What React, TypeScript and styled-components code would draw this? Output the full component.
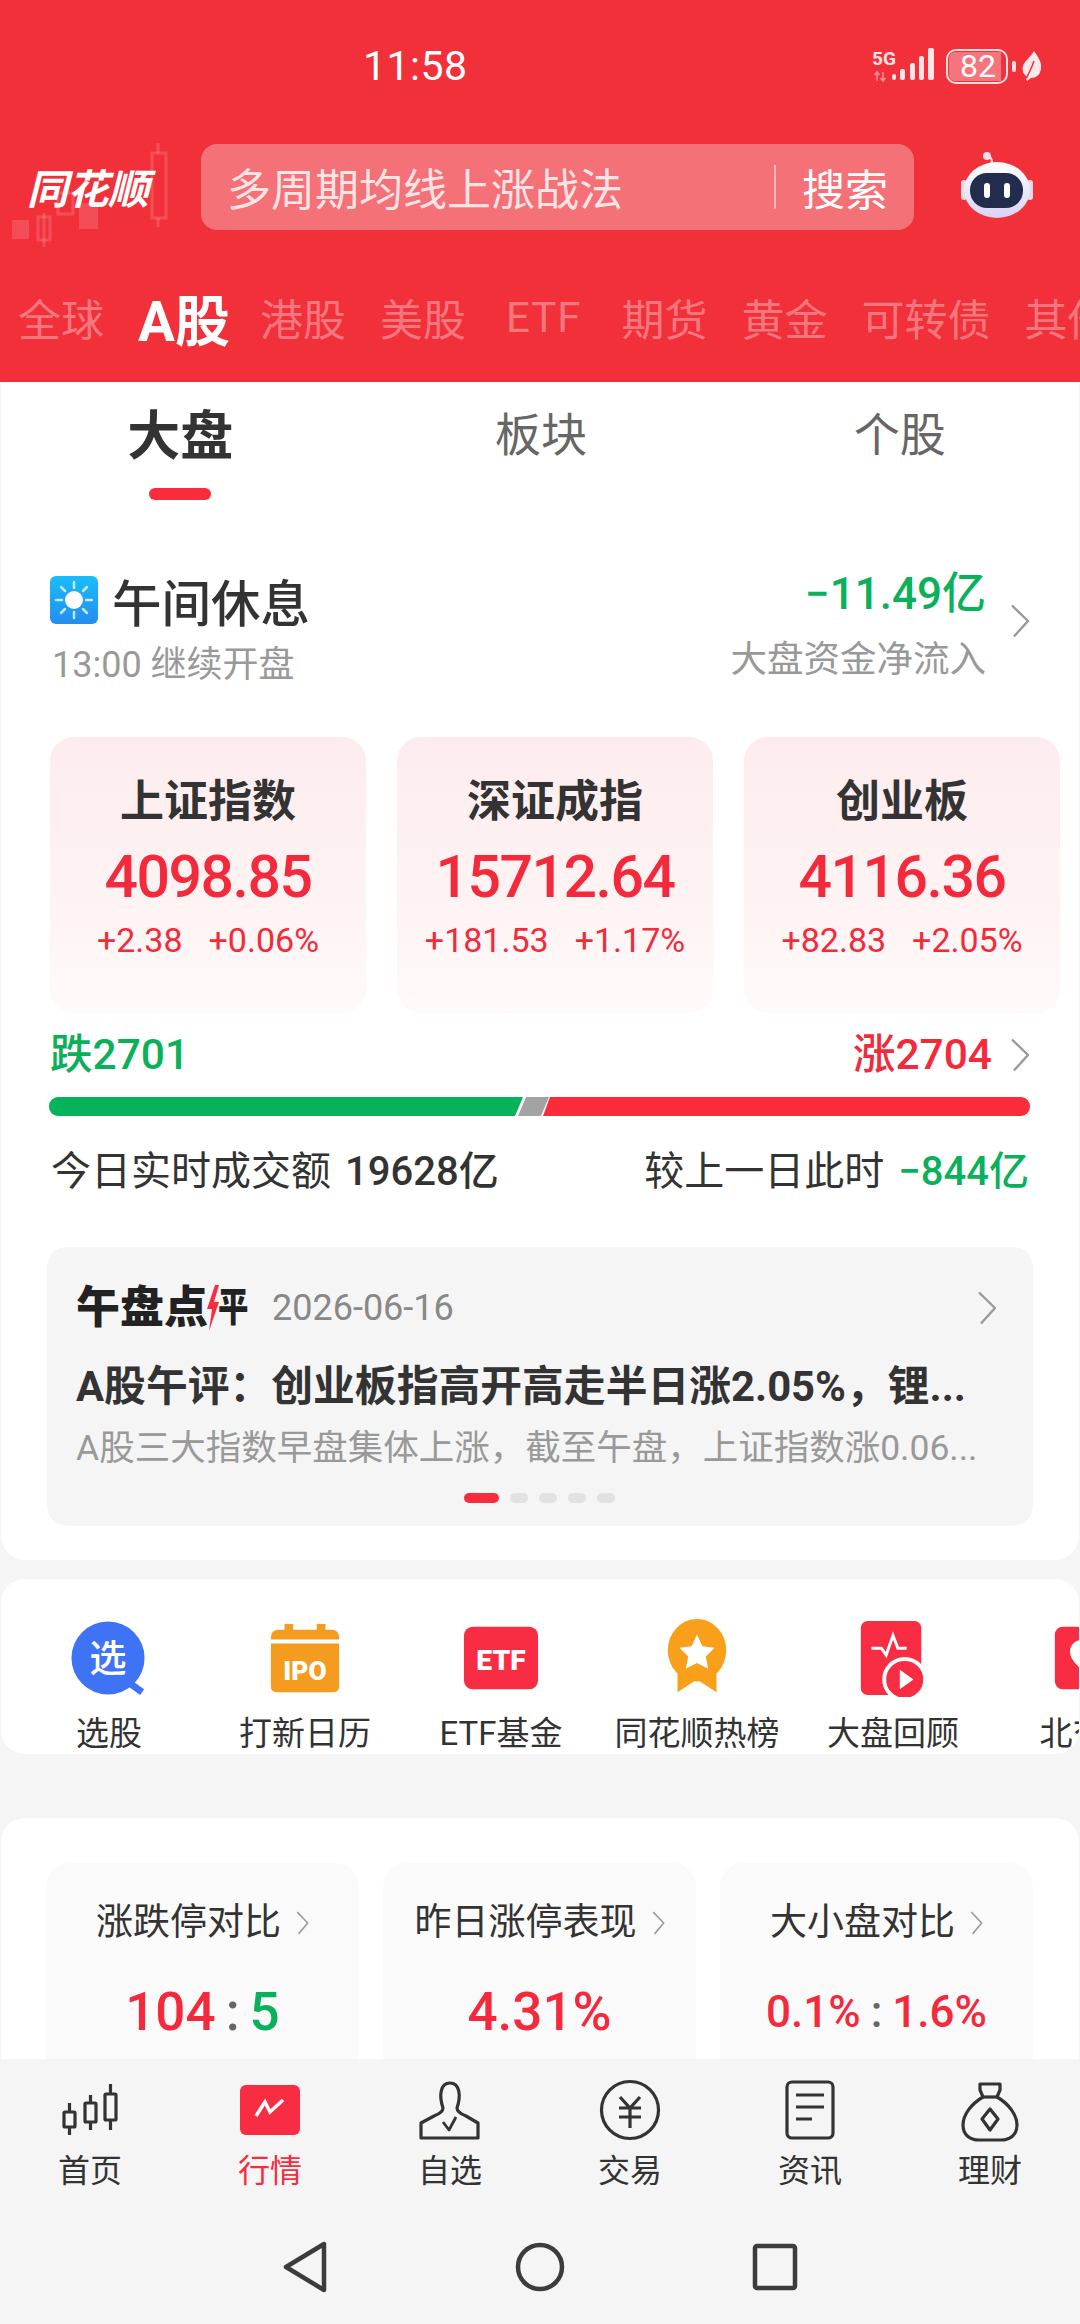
import React from 'react';
import styled, { createGlobalStyle } from 'styled-components';

const RED = '#f32a3c';
const GREEN = '#0bb05a';

const markets = ['全球', 'A股', '港股', '美股', 'ETF', '期货', '黄金', '可转债', '其他'];

const indexes = [
  { name: '上证指数', value: '4098.85', diff: '+2.38', pct: '+0.06%' },
  { name: '深证成指', value: '15712.64', diff: '+181.53', pct: '+1.17%' },
  { name: '创业板', value: '4116.36', diff: '+82.83', pct: '+2.05%' },
];

const Chevron: React.FC<{ w?: number; h?: number }> = ({ w = 20, h = 34 }) => (
  <svg width={w} height={h} viewBox="0 0 20 34" fill="none" preserveAspectRatio="none">
    <path d="M2 1.500 L18 17 L4 32.500" stroke="#999" strokeWidth="2.400" strokeLinejoin="round" />
  </svg>
);

const StatusIcons = () => (
  <StatusRight>
    <svg width="72" height="38" viewBox="0 0 72 38">
      <text x="0" y="18" fontFamily="Roboto" fontWeight="700" fontSize="19" fill="#ffe3e5">5G</text>
      <path d="M5 25v9M2.500 28l2.500-3 2.500 3M11 25v9M8.500 31l2.500 3 2.500-3" stroke="#f78d92" strokeWidth="1.600" fill="none" />
      <rect x="20" y="27" width="4" height="6" rx="2" fill="#ffe3e5" />
      <rect x="28" y="22" width="5" height="11" rx="2" fill="#ffe3e5" />
      <rect x="38" y="16" width="5" height="17" rx="2" fill="#ffe3e5" />
      <rect x="47" y="9" width="5" height="24" rx="2" fill="#ffe3e5" />
      <rect x="56" y="1" width="6" height="32" rx="2" fill="#ffe3e5" />
    </svg>
    <Battery>
      <BatteryLevel>82</BatteryLevel>
    </Battery>
    <BatteryNub />
    <svg width="20" height="30" viewBox="0 0 20 30">
      <path d="M12 0 C16 6 20 11 19 18 C18 24 14 27 9 27 L5 30 L4 28 L6 26 C1 24 0 19 1 15 C3 9 9 6 12 0 Z" fill="#ffe9ea" />
      <path d="M5 26 C8 20 10 16 12 10" stroke="#f1303a" strokeWidth="1.500" fill="none" />
    </svg>
  </StatusRight>
);

const Candles = () => (
  <CandleArt width="170" height="110" viewBox="0 0 170 110">
    <g fill="#ffffff" fillOpacity="0.15" stroke="none">
      <rect x="12" y="82" width="17" height="19" />
      <rect x="79" y="65" width="19" height="26" />
    </g>
    <g fill="none" stroke="#ffffff" strokeOpacity="0.15" strokeWidth="3">
      <rect x="38" y="79" width="12" height="23" />
      <path d="M44 75v34" />
      <rect x="58" y="55" width="15" height="21" />
      <rect x="152" y="15" width="14" height="65" />
      <path d="M158 5v10M158 80v9" />
    </g>
  </CandleArt>
);

const Robot = () => (
  <RobotArt width="72" height="68" viewBox="0 0 72 68">
    <defs>
      <linearGradient id="robotShell" x1="0" y1="0" x2="0" y2="1">
        <stop offset="0" stopColor="#ffffff" />
        <stop offset="1" stopColor="#d9d3f5" />
      </linearGradient>
    </defs>
    <path d="M31 11 C31 6 29 4 26 4" stroke="#f7dfe3" strokeWidth="2" fill="none" />
    <circle cx="26" cy="4" r="4" fill="#f5dfe4" />
    <rect x="0" y="28" width="6" height="20" rx="3" fill="#e9d9e2" />
    <rect x="66" y="28" width="6" height="20" rx="3" fill="#e9d9e2" />
    <ellipse cx="36" cy="38" rx="33" ry="28" fill="url(#robotShell)" />
    <rect x="9" y="21" width="53" height="35" rx="17" fill="#222c4d" />
    <rect x="23" y="31" width="6" height="15" rx="3" fill="#fff" />
    <rect x="43" y="31" width="6" height="15" rx="3" fill="#fff" />
  </RobotArt>
);

const SunIcon = () => (
  <svg width="48" height="48" viewBox="0 0 48 48">
    <defs>
      <linearGradient id="sunBg" x1="0" y1="0" x2="0" y2="1">
        <stop offset="0" stopColor="#19bdf9" />
        <stop offset="1" stopColor="#258cf0" />
      </linearGradient>
    </defs>
    <rect width="48" height="48" rx="6" fill="url(#sunBg)" />
    <circle cx="24" cy="24" r="9" fill="#fff" />
    <path d="M24 6v6M24 36v6M6 24h6M36 24h6M11 11l4 4M33 33l4 4M37 11l-4 4M15 33l-4 4" stroke="#bfeafd" strokeWidth="2.500" strokeLinecap="round" />
  </svg>
);

const PickIcon = () => (
  <svg width="80" height="80" viewBox="0 0 80 80">
    <path d="M62 62 L76 72 L72 78 L58 68 Z" fill="#3f73f6" />
    <circle cx="39" cy="40" r="37.500" fill="#3f73f6" />
    <text x="39" y="54" textAnchor="middle" fontFamily="'Noto Sans CJK SC'" fontWeight="500" fontSize="38" fill="#fff">选</text>
  </svg>
);

const IpoIcon = () => (
  <svg width="80" height="80" viewBox="0 0 80 80">
    <path d="M5 19 Q5 11 13 11 H19 V5 H28 V11 H52 V5 H61 V11 H67 Q75 11 75 19 V21 H5 Z" fill="#f39c1f" />
    <path d="M5 25 H75 V69 Q75 75 69 75 H11 Q5 75 5 69 Z" fill="#f39c1f" />
    <text x="40" y="63" textAnchor="middle" fontFamily="Roboto" fontWeight="900" fontSize="27" fill="#fff">IPO</text>
  </svg>
);

const EtfIcon = () => (
  <svg width="80" height="80" viewBox="0 0 80 80">
    <rect x="2" y="8" width="76" height="64" rx="9" fill="#f82c43" />
    <text x="40" y="52" textAnchor="middle" fontFamily="Roboto" fontWeight="900" fontSize="29" fill="#fff">ETF</text>
  </svg>
);

const MedalIcon = () => (
  <svg width="80" height="80" viewBox="0 0 80 80">
    <path d="M20 50 V75 L40 62 L60 75 V50 Z" fill="#f9a01b" />
    <ellipse cx="40" cy="32" rx="30" ry="32" fill="#f9a01b" />
    <path d="M40 16 L45.500 28 L58 29.500 L49 38.500 L51.500 51 L40 45 L28.500 51 L31 38.500 L22 29.500 L34.500 28 Z" fill="#fff" />
  </svg>
);

const ReviewIcon = () => (
  <svg width="80" height="80" viewBox="0 0 80 80">
    <rect x="7" y="2" width="62" height="76" rx="7" fill="#f82c43" />
    <path d="M18 30 H28 L33 37 L40 17 L45 30 H54" stroke="#fff" strokeWidth="3" fill="none" />
    <circle cx="52" cy="62" r="21" fill="#f82c43" stroke="#fff" strokeWidth="4" />
    <path d="M47 52 L61 62 L47 72 Z" fill="#fff" />
  </svg>
);

const NorthIcon = () => (
  <svg width="80" height="80" viewBox="0 0 80 80">
    <rect x="5" y="8" width="70" height="64" rx="8" fill="#f82c43" />
    <path d="M40 23 C30 18 18 25 21 37 C23 45 33 52 40 59 C47 52 57 45 59 37 C62 25 50 18 40 23 Z" fill="#fff" />
  </svg>
);

const CandleNav = () => (
  <svg width="70" height="64" viewBox="0 0 70 64" fill="none" stroke="#333" strokeWidth="3.200">
    <rect x="9" y="34" width="11" height="15" rx="1" />
    <path d="M14.500 25v9M14.500 49v8" />
    <rect x="30" y="25" width="11" height="19" rx="1" />
    <path d="M35.500 17v8M35.500 44v8" />
    <rect x="50" y="16" width="11" height="26" rx="1" />
    <path d="M55.500 6v10M55.500 42v10" />
  </svg>
);

const MarketNav = () => (
  <svg width="70" height="64" viewBox="0 0 70 64">
    <rect x="5" y="7" width="60" height="50" rx="6" fill="#f82c43" />
    <path d="M21 38 L30 24 L35 34 L48 22" stroke="#fff" strokeWidth="3.500" fill="none" />
  </svg>
);

const WatchNav = () => (
  <svg width="70" height="64" viewBox="0 0 70 64" fill="none" stroke="#333" strokeWidth="3.200" strokeLinejoin="round">
    <path d="M28 30 C24 18 25 5 35 5 C45 5 46 18 42 30 C42 34 46 36 51 38 L63 45 V60 H6 V45 L19 38 C24 36 28 34 28 30 Z" />
    <path d="M28 44 L34 52 L41 39" strokeWidth="2.800" />
  </svg>
);

const TradeNav = () => (
  <svg width="70" height="64" viewBox="0 0 70 64" fill="none" stroke="#333" strokeWidth="3.200">
    <circle cx="35" cy="32" r="28.500" />
    <path d="M25 19 L35 30 L45 19M24 30H46M24 39H46M35 30V50" />
  </svg>
);

const NewsNav = () => (
  <svg width="70" height="64" viewBox="0 0 70 64" fill="none" stroke="#333" strokeWidth="3.200">
    <rect x="12" y="4" width="46" height="56" rx="5" />
    <path d="M21 17H49M21 29H49M21 41H37" />
  </svg>
);

const WealthNav = () => (
  <svg width="70" height="64" viewBox="0 0 70 64" fill="none" stroke="#333" strokeWidth="3.200" strokeLinejoin="round">
    <path d="M25 6 H45 V12 L42 19 C54 26 62 37 62 47 C62 57 55 62 46 62 H24 C15 62 8 57 8 47 C8 37 16 26 28 19 L25 12 Z" />
    <path d="M28 19H42" />
    <path d="M35 31 L43 41 L35 52 L27 41 Z" />
  </svg>
);

const shortcuts = [
  { label: '选股', icon: <PickIcon /> },
  { label: '打新日历', icon: <IpoIcon /> },
  { label: 'ETF基金', icon: <EtfIcon /> },
  { label: '同花顺热榜', icon: <MedalIcon /> },
  { label: '大盘回顾', icon: <ReviewIcon /> },
  { label: '北交所', icon: <NorthIcon /> },
];

const navs = [
  { label: '首页', icon: <CandleNav /> },
  { label: '行情', icon: <MarketNav />, active: true },
  { label: '自选', icon: <WatchNav /> },
  { label: '交易', icon: <TradeNav /> },
  { label: '资讯', icon: <NewsNav /> },
  { label: '理财', icon: <WealthNav /> },
];

const App: React.FC = () => (
  <Page>
    <GlobalStyle />
    <Header>
      <StatusBar>
        <Clock>11:58</Clock>
        <StatusIcons />
      </StatusBar>
      <SearchRow>
        <LogoBox>
          <Candles />
          <LogoText>同花顺</LogoText>
        </LogoBox>
        <SearchBar>
          <Placeholder>多周期均线上涨战法</Placeholder>
          <SearchDivider />
          <SearchButton>搜索</SearchButton>
        </SearchBar>
        <Robot />
      </SearchRow>
      <MarketTabs>
        {markets.map((m) => (
          <MarketTab key={m} $active={m === 'A股'} $latin={m === 'ETF'}>{m}</MarketTab>
        ))}
      </MarketTabs>
    </Header>

    <Scroll>
      <MainCard>
        <SubTabs>
          <SubTab $active>大盘<Indicator /></SubTab>
          <SubTab>板块</SubTab>
          <SubTab>个股</SubTab>
        </SubTabs>

        <SessionRow>
          <div>
            <SessionTitle><SunIcon />午间休息</SessionTitle>
            <SessionSub>13:00 继续开盘</SessionSub>
          </div>
          <FlowBox>
            <div>
              <FlowValue>−11.49亿</FlowValue>
              <FlowLabel>大盘资金净流入</FlowLabel>
            </div>
            <Chevron />
          </FlowBox>
        </SessionRow>

        <IndexRow>
          {indexes.map((x) => (
            <IndexCard key={x.name}>
              <IndexName>{x.name}</IndexName>
              <IndexValue>{x.value}</IndexValue>
              <IndexDiff>
                <span>{x.diff}</span>
                <span>{x.pct}</span>
              </IndexDiff>
            </IndexCard>
          ))}
        </IndexRow>

        <BreadthRow>
          <BreadthText $color={GREEN}>跌2701</BreadthText>
          <BreadthRight>
            <BreadthText $color={RED}>涨2704</BreadthText>
            <Chevron />
          </BreadthRight>
        </BreadthRow>
        <BreadthBar>
          <FallPart />
          <FlatPart />
          <RisePart />
        </BreadthBar>

        <VolumeRow>
          <span>今日实时成交额<VolumeNum>19628亿</VolumeNum></span>
          <span>较上一日此时<VolumeNum $color={GREEN}>−844亿</VolumeNum></span>
        </VolumeRow>

        <NoteCard>
          <NoteHead>
            <NoteBrand>
              午盘点
              <svg width="14" height="46" viewBox="0 0 14 46">
                <path d="M9 0 L1 24 H6 L3 46 L13 17 H8 L13 0 Z" fill="#f82c43" />
              </svg>
              <NoteBrandTail>平</NoteBrandTail>
            </NoteBrand>
            <NoteDate>2026-06-16</NoteDate>
            <NoteChevron><Chevron /></NoteChevron>
          </NoteHead>
          <NoteTitle>A股午评：创业板指高开高走半日涨2.05%，锂...</NoteTitle>
          <NoteDesc>A股三大指数早盘集体上涨，截至午盘，上证指数涨0.06...</NoteDesc>
          <Dots>
            {[0, 1, 2, 3, 4].map((i) => (
              <Dot key={i} $active={i === 0} />
            ))}
          </Dots>
        </NoteCard>
      </MainCard>

      <ShortcutCard>
        {shortcuts.map((s) => (
          <Shortcut key={s.label}>
            {s.icon}
            <ShortcutLabel>{s.label}</ShortcutLabel>
          </Shortcut>
        ))}
      </ShortcutCard>

      <StatsCard>
        <StatTile>
          <StatTitle>涨跌停对比<Chevron w={13} h={24} /></StatTitle>
          <StatValue><Up>104</Up><Colon>:</Colon><Down>5</Down></StatValue>
        </StatTile>
        <StatTile>
          <StatTitle>昨日涨停表现<Chevron w={13} h={24} /></StatTitle>
          <StatValue><Up>4.31%</Up></StatValue>
        </StatTile>
        <StatTile>
          <StatTitle>大小盘对比<Chevron w={13} h={24} /></StatTitle>
          <StatValue $small><Up>0.1%</Up><Colon>:</Colon><Up>1.6%</Up></StatValue>
        </StatTile>
      </StatsCard>
    </Scroll>

    <BottomBar>
      <NavRow>
        {navs.map((n) => (
          <NavItem key={n.label} $active={n.active}>
            {n.icon}
            <NavLabel>{n.label}</NavLabel>
          </NavItem>
        ))}
      </NavRow>
      <SystemNav>
        <svg width="60" height="60" viewBox="0 0 60 60" fill="none" stroke="#3c3c3c" strokeWidth="4.500" strokeLinejoin="round">
          <path d="M49 7 V53 L11 30 Z" />
        </svg>
        <svg width="60" height="60" viewBox="0 0 60 60" fill="none" stroke="#3c3c3c" strokeWidth="4.500">
          <circle cx="30" cy="30" r="22" />
        </svg>
        <svg width="60" height="60" viewBox="0 0 60 60" fill="none" stroke="#3c3c3c" strokeWidth="4.500" strokeLinejoin="round">
          <rect x="10" y="9" width="40" height="42" rx="2" />
        </svg>
      </SystemNav>
    </BottomBar>
  </Page>
);

const GlobalStyle = createGlobalStyle`
  html, body {
    margin: 0;
    padding: 0;
    background: #f5f5f5;
  }
  * {
    box-sizing: border-box;
  }
`;

const Page = styled.div`
  width: 1080px;
  height: 2324px;
  display: flex;
  flex-direction: column;
  overflow: hidden;
  background: #f5f5f5;
  font-family: Roboto, "Noto Sans CJK SC", sans-serif;
  color: #333;
`;

const Header = styled.header`
  height: 382px;
  flex: none;
  overflow: hidden;
  background: #f1303a;
  color: #fff;
`;

const StatusBar = styled.div`
  height: 132px;
  display: flex;
  align-items: center;
  padding: 0 38px 0 363px;
`;

const Clock = styled.div`
  font-size: 41px;
  letter-spacing: 0.5px;
  color: #fff;
`;

const StatusRight = styled.div`
  margin-left: auto;
  display: flex;
  align-items: center;
`;

const Battery = styled.div`
  width: 62px;
  height: 35px;
  margin-left: 2px;
  padding: 1px;
  border: 2.500px solid #ffdfe1;
  border-radius: 10px;
`;

const BatteryLevel = styled.div`
  width: 52px;
  height: 100%;
  border-radius: 6px 0 0 6px;
  background: #f5757c;
  font-size: 32px;
  line-height: 28px;
  text-align: center;
  padding-left: 6px;
`;

const BatteryNub = styled.div`
  width: 4px;
  height: 11px;
  margin: 0 6px 0 4px;
  border-radius: 2px;
  background: #ffdfe1;
`;

const SearchRow = styled.div`
  display: flex;
  align-items: flex-start;
  padding-top: 12px;
  height: 98px;
`;

const LogoBox = styled.div`
  position: relative;
  width: 201px;
  height: 86px;
  flex: none;
`;

const CandleArt = styled.svg`
  position: absolute;
  left: 0;
  top: -6px;
`;

const LogoText = styled.div`
  position: absolute;
  left: 27px;
  top: 22px;
  font-size: 41px;
  line-height: 48px;
  font-weight: 700;
  font-style: italic;
  letter-spacing: -0.5px;
  color: #fff;
`;

const SearchBar = styled.div`
  width: 713px;
  height: 86px;
  flex: none;
  display: flex;
  align-items: center;
  padding: 0 26px;
  border-radius: 16px;
  background: #f47178;
`;

const Placeholder = styled.div`
  flex: 1;
  font-size: 44px;
  color: rgba(255, 255, 255, 0.82);
`;

const SearchDivider = styled.div`
  width: 2px;
  height: 44px;
  background: rgba(255, 255, 255, 0.5);
  margin-right: 26px;
`;

const SearchButton = styled.div`
  font-size: 43px;
  color: #fff;
`;

const RobotArt = styled.svg`
  flex: none;
  margin: 8px 0 0 47px;
`;

const MarketTabs = styled.div`
  height: 100px;
  margin-top: 37px;
  display: flex;
  align-items: center;
  gap: 34px;
  padding: 0 0 0 18px;
  white-space: nowrap;
`;

const MarketTab = styled.div<{ $active?: boolean; $latin?: boolean }>`
  flex: none;
  font-size: ${(p) => (p.$active ? 55 : p.$latin ? 42 : 43)}px;
  font-weight: ${(p) => (p.$active ? 700 : 400)};
  color: ${(p) => (p.$active ? '#fff' : 'rgba(255, 255, 255, 0.36)')};
  margin: ${(p) => (p.$latin ? '0 6px' : p.$active ? '0 -4px 0 0' : 0)};
  letter-spacing: ${(p) => (p.$latin ? '1px' : 0)};
`;

const Scroll = styled.main`
  flex: 1;
  min-height: 0;
  overflow: hidden;
`;

const MainCard = styled.section`
  margin: 0 1px;
  padding-bottom: 34px;
  background: #fff;
  border-radius: 0 0 24px 24px;
`;

const SubTabs = styled.div`
  display: flex;
  padding-top: 28px;
  height: 118px;
`;

const SubTab = styled.div<{ $active?: boolean }>`
  flex: 1;
  display: flex;
  flex-direction: column;
  align-items: center;
  font-size: ${(p) => (p.$active ? 53 : 46)}px;
  line-height: ${(p) => (p.$active ? 54 : 50)}px;
  font-weight: ${(p) => (p.$active ? 700 : 400)};
  color: ${(p) => (p.$active ? '#333' : '#666')};
  &:first-child {
    margin-right: 2px;
  }
`;

const Indicator = styled.div`
  width: 62px;
  height: 12px;
  flex: none;
  margin-top: 24px;
  border-radius: 6px;
  background: #f82c3c;
`;

const SessionRow = styled.div`
  margin-top: 60px;
  height: 140px;
  padding: 0 49px;
  display: flex;
  justify-content: space-between;
`;

const SessionTitle = styled.div`
  height: 80px;
  display: flex;
  align-items: center;
  gap: 14px;
  font-size: 49.500px;
  font-weight: 500;
  color: #333;
`;

const SessionSub = styled.div`
  padding-left: 2px;
  font-size: 36px;
  line-height: 50px;
  color: #999;
`;

const FlowBox = styled.div`
  display: flex;
  gap: 24px;
  text-align: right;
  svg {
    margin-top: 44px;
  }
`;

const FlowValue = styled.div`
  height: 60px;
  font-size: 44px;
  line-height: 68px;
  font-weight: 500;
  color: ${GREEN};
`;

const FlowLabel = styled.div`
  font-size: 36.500px;
  line-height: 80px;
  color: #999;
`;

const IndexRow = styled.div`
  margin-top: 37px;
  padding-left: 49px;
  display: flex;
  gap: 31px;
`;

const IndexCard = styled.div`
  width: 316px;
  height: 276px;
  padding-top: 35px;
  flex: none;
  display: flex;
  flex-direction: column;
  align-items: center;
  border-radius: 24px;
  background: linear-gradient(180deg, #fdeced 0%, #fef4f4 65%, #fffafa 100%);
`;

const IndexName = styled.div`
  font-size: 44px;
  line-height: 60px;
  font-weight: 700;
  color: #333;
`;

const IndexValue = styled.div`
  margin-top: 10px;
  font-size: 59px;
  line-height: 70px;
  font-weight: 500;
  letter-spacing: -1.500px;
  color: ${RED};
`;

const IndexDiff = styled.div`
  margin-top: 8px;
  display: flex;
  gap: 26px;
  font-size: 34px;
  line-height: 40px;
  color: ${RED};
`;

const BreadthRow = styled.div`
  margin-top: 17px;
  height: 50px;
  padding: 0 49px 0 49px;
  display: flex;
  justify-content: space-between;
  align-items: center;
`;

const BreadthRight = styled.div`
  display: flex;
  align-items: center;
  gap: 18px;
`;

const BreadthText = styled.div<{ $color: string }>`
  font-size: 42.500px;
  line-height: 54px;
  font-weight: 500;
  color: ${(p) => p.$color};
`;

const BreadthBar = styled.div`
  margin: 17px 49px 0 48px;
  height: 19px;
  display: flex;
  border-radius: 9px;
  overflow: hidden;
`;

const FallPart = styled.div`
  width: 474px;
  flex: none;
  background: #06b25b;
  clip-path: polygon(0 0, 100% 0, calc(100% - 8px) 100%, 0 100%);
`;

const FlatPart = styled.div`
  width: 31px;
  flex: none;
  margin-left: -5px;
  background: #a3a3a3;
  clip-path: polygon(8px 0, 100% 0, calc(100% - 8px) 100%, 0 100%);
`;

const RisePart = styled.div`
  flex: 1;
  margin-left: -6px;
  background: #fb2b3a;
  clip-path: polygon(7px 0, 100% 0, 100% 100%, 0 100%);
`;

const VolumeRow = styled.div`
  margin-top: 31px;
  padding: 0 50px 0 50px;
  display: flex;
  justify-content: space-between;
  font-size: 40px;
  line-height: 50px;
  color: #333;
`;

const VolumeNum = styled.span<{ $color?: string }>`
  margin-left: 14px;
  font-weight: 500;
  color: ${(p) => p.$color || '#333'};
`;

const NoteCard = styled.div`
  margin: 50px 46px 0;
  height: 279px;
  padding: 36px 0 0 29px;
  border-radius: 20px;
  background: #f5f5f5;
`;

const NoteHead = styled.div`
  height: 50px;
  display: flex;
  align-items: center;
`;

const NoteBrand = styled.div`
  display: flex;
  align-items: center;
  font-size: 44px;
  line-height: 50px;
  font-weight: 900;
  color: #222;
  svg {
    margin: 0 -2px 0 -2px;
  }
`;

const NoteBrandTail = styled.span`
  width: 30px;
  font-size: 40px;
  transform: scaleX(0.76);
  transform-origin: left center;
`;

const NoteDate = styled.div`
  margin-left: 24px;
  font-size: 36px;
  color: #888;
`;

const NoteChevron = styled.div`
  margin-left: auto;
  padding-right: 36px;
  display: flex;
`;

const NoteTitle = styled.div`
  margin-top: 29px;
  font-size: 41.800px;
  line-height: 50px;
  font-weight: 700;
  white-space: nowrap;
  color: #333;
`;

const NoteDesc = styled.div`
  margin-top: 14px;
  font-size: 35.500px;
  line-height: 44px;
  white-space: nowrap;
  color: #999;
`;

const Dots = styled.div`
  margin: 23px 0 0 388px;
  display: flex;
  gap: 11px;
`;

const Dot = styled.div<{ $active?: boolean }>`
  width: ${(p) => (p.$active ? 35 : 18)}px;
  height: 10px;
  border-radius: 5px;
  background: ${(p) => (p.$active ? '#f82c3c' : '#e2e2e2')};
`;

const ShortcutCard = styled.section`
  margin: 19px 1px 0;
  height: 175px;
  padding: 40px 0 0 10px;
  display: flex;
  overflow: hidden;
  background: #fff;
  border-radius: 24px;
`;

const Shortcut = styled.div`
  width: 196px;
  flex: none;
  display: flex;
  flex-direction: column;
  align-items: center;
`;

const ShortcutLabel = styled.div`
  margin-top: 17px;
  font-size: 33px;
  line-height: 40px;
  white-space: nowrap;
  color: #333;
`;

const StatsCard = styled.section`
  margin: 64px 1px 0;
  height: 400px;
  padding: 45px 0 0 45px;
  display: flex;
  gap: 24px;
  background: #fff;
  border-radius: 24px 24px 0 0;
`;

const StatTile = styled.div`
  width: 313px;
  height: 300px;
  padding-top: 35px;
  display: flex;
  flex-direction: column;
  align-items: center;
  border-radius: 24px;
  background: #fafafa;
`;

const StatTitle = styled.div`
  display: flex;
  align-items: center;
  gap: 15px;
  font-size: 37px;
  line-height: 50px;
  white-space: nowrap;
  color: #333;
`;

const StatValue = styled.div<{ $small?: boolean }>`
  margin-top: 34px;
  display: flex;
  gap: 10px;
  font-size: ${(p) => (p.$small ? 44 : 53)}px;
  line-height: 60px;
  font-weight: 500;
`;

const Up = styled.span`
  color: ${RED};
`;

const Down = styled.span`
  color: ${GREEN};
`;

const Colon = styled.span`
  color: #666;
`;

const BottomBar = styled.footer`
  height: 265px;
  flex: none;
  background: #f5f5f5;
`;

const NavRow = styled.nav`
  padding-top: 19px;
  display: flex;
`;

const NavItem = styled.div<{ $active?: boolean }>`
  width: 180px;
  display: flex;
  flex-direction: column;
  align-items: center;
  color: ${(p) => (p.$active ? '#f82c3c' : '#333')};
`;

const NavLabel = styled.div`
  margin-top: 9px;
  font-size: 32px;
  line-height: 40px;
`;

const SystemNav = styled.div`
  margin-top: 46px;
  display: flex;
  justify-content: center;
  gap: 175px;
`;

export default App;
